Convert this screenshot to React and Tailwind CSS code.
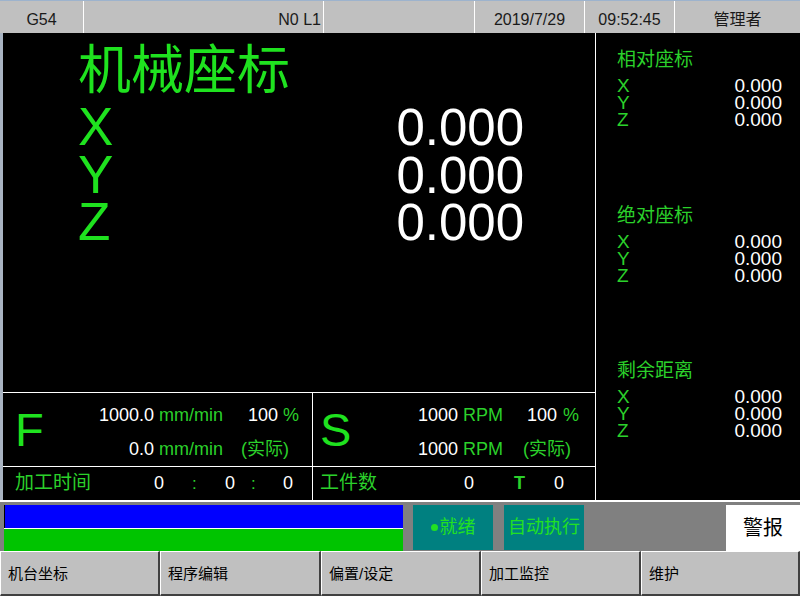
const bigGreen = "text-[#1fe21f]";
const green = "text-[#2bd12b]";

const AxisBlock = ({ title }) => (
  <div className="flex-1 pt-[16px] pl-[21px] pr-[18px]">
    <div className={`text-[19px] leading-[22px] ${green}`}>{title}</div>
    <div className="mt-[6px] text-[19px] leading-[17px]">
      {["X", "Y", "Z"].map((a) => (
        <div key={a} className="flex justify-between">
          <span className={green}>{a}</span>
          <span className="text-white">0.000</span>
        </div>
      ))}
    </div>
  </div>
);

const Sep = () => <div className="w-px bg-white" />;

export default function App() {
  const tabs = [
    ["机台坐标", "w-[160px]"],
    ["程序编辑", "w-[161px]"],
    ["偏置/设定", "w-[160px]"],
    ["加工监控", "w-[160px]"],
    ["维护", "w-[159px]"],
  ];

  return (
    <div className="w-[800px] h-[596px] overflow-hidden bg-black flex flex-col font-['Liberation_Sans','Noto_Sans_CJK_SC',sans-serif]">
      {/* title bar */}
      <div className="h-[33px] flex bg-[#c0c0c0] border-t border-[#9db3cd] text-[16px] text-[#1a1a1a]">
        <div className="w-[83px] flex items-center justify-center pt-[5px]">G54</div>
        <Sep />
        <div className="w-[239px] flex items-center justify-end pr-[2px] pt-[5px]">N0 L1</div>
        <Sep />
        <div className="w-[150px]" />
        <Sep />
        <div className="w-[109px] flex items-center justify-center pt-[5px]">2019/7/29</div>
        <Sep />
        <div className="w-[89px] flex items-center justify-center pt-[5px]">09:52:45</div>
        <Sep />
        <div className="flex-1 flex items-center justify-center pt-[5px]">管理者</div>
      </div>

      {/* main */}
      <div className="h-[467px] flex border-l-[3px] border-[#a9b4c2]">
        <div className="w-[592px] flex flex-col">
          <div className="h-[359px] pt-[10px] pl-[75px] pr-[71px]">
            <div className={`text-[53px] leading-[56px] ${bigGreen}`}>机械座标</div>
            <div className="mt-[5px] leading-[46.5px]">
              {["X", "Y", "Z"].map((a) => (
                <div key={a} className="flex justify-between items-baseline">
                  <span className={`text-[53px] ${bigGreen}`}>{a}</span>
                  <span className="text-[51px] text-white">0.000</span>
                </div>
              ))}
            </div>
          </div>

          <div className="h-[74px] border-t border-white flex">
            <div className="w-[310px] border-r border-white flex">
              <div className={`w-[70px] pl-[12px] flex items-center text-[47px] leading-none ${bigGreen}`}>F</div>
              <div className="pt-[5px] text-[18px] leading-[34px]">
                <div className="flex">
                  <span className="w-[81px] text-right text-white">1000.0</span>
                  <span className={`ml-[5px] w-[82px] ${green}`}>mm/min</span>
                  <span className="w-[37px] text-right text-white">100</span>
                  <span className={`ml-[5px] ${green}`}>%</span>
                </div>
                <div className="flex">
                  <span className="w-[81px] text-right text-white">0.0</span>
                  <span className={`ml-[5px] w-[82px] ${green}`}>mm/min</span>
                  <span className={green}>(实际)</span>
                </div>
              </div>
            </div>
            <div className="flex-1 flex">
              <div className={`w-[100px] pl-[7px] flex items-center text-[47px] leading-none ${bigGreen}`}>S</div>
              <div className="pt-[5px] text-[18px] leading-[34px]">
                <div className="flex">
                  <span className="w-[45px] text-right text-white">1000</span>
                  <span className={`ml-[5px] w-[60px] ${green}`}>RPM</span>
                  <span className="w-[34px] text-right text-white">100</span>
                  <span className={`ml-[6px] ${green}`}>%</span>
                </div>
                <div className="flex">
                  <span className="w-[45px] text-right text-white">1000</span>
                  <span className={`ml-[5px] w-[60px] ${green}`}>RPM</span>
                  <span className={green}>(实际)</span>
                </div>
              </div>
            </div>
          </div>

          <div className="h-[34px] border-t border-white flex text-[18px]">
            <div className="w-[310px] border-r border-white flex items-center pl-[12px]">
              <span className={`w-[139px] text-[19px] ${green}`}>加工时间</span>
              <span className="w-[38px] text-white">0</span>
              <span className={`w-[33px] text-[17px] ${green}`}>:</span>
              <span className="w-[26px] text-white">0</span>
              <span className={`w-[32px] text-[17px] ${green}`}>:</span>
              <span className="text-white">0</span>
            </div>
            <div className="flex-1 flex items-center pl-[7px]">
              <span className={`w-[144px] text-[19px] ${green}`}>工件数</span>
              <span className="w-[50px] text-white">0</span>
              <span className={`w-[40px] font-bold ${green}`}>T</span>
              <span className="text-white">0</span>
            </div>
          </div>
        </div>

        <Sep />

        <div className="flex-1 flex flex-col">
          <AxisBlock title="相对座标" />
          <AxisBlock title="绝对座标" />
          <AxisBlock title="剩余距离" />
        </div>
      </div>

      <div className="h-[2px] bg-white" />

      {/* status bar */}
      <div className="h-[49px] bg-[#808080] flex pl-[4px] pt-[3px]">
        <div className="w-[399px] flex flex-col">
          <div className="h-[23px] bg-[#0000ff] border-l border-black" />
          <div className="h-px bg-white" />
          <div className="flex-1 bg-[#00c400]" />
        </div>
        <div className="ml-[10px] w-[80px] h-[45px] bg-[#008080] flex items-center justify-center text-[18px] text-[#22e022]">
          <span className="w-[7px] h-[7px] rounded-full bg-[#22e022] mr-[2px]" />
          就绪
        </div>
        <div className="ml-[11px] w-[80px] h-[45px] bg-[#008080] flex items-center justify-center text-[18px] text-[#22e022]">
          自动执行
        </div>
        <div className="ml-auto w-[74px] h-[46px] bg-white flex items-center justify-center text-[20px] text-black">
          警报
        </div>
      </div>

      {/* soft keys */}
      <div className="h-[45px] flex">
        {tabs.map(([label, w]) => (
          <div
            key={label}
            className={`${w} bg-[#c0c0c0] border-t border-l border-white border-r-2 border-b-2 border-r-[#404040] border-b-[#404040] flex items-center pl-[7px] pt-[2px] text-[15px] text-black`}
          >
            {label}
          </div>
        ))}
      </div>
    </div>
  );
}
